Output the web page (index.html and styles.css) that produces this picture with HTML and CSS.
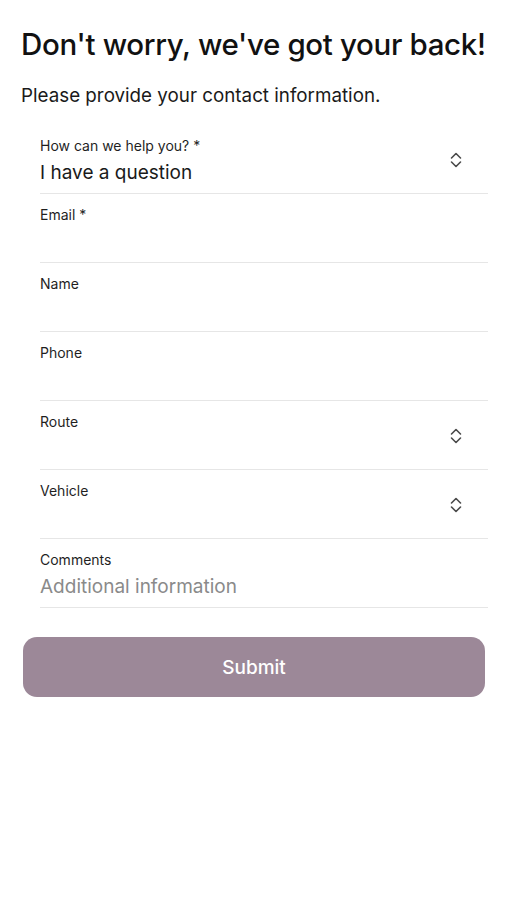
FILE: index.html
```html
<!DOCTYPE html>
<html lang="en">
<head>
<meta charset="utf-8">
<title>Contact</title>
<link rel="stylesheet" href="styles.css">
</head>
<body>
<main class="page">
  <h1 class="title">Don't worry, we've got your back!</h1>
  <p class="subtitle">Please provide your contact information.</p>
  <form class="form">
    <div class="row has-select">
      <div class="field">
        <span class="label">How can we help you? *</span>
        <span class="value">I have a question</span>
      </div>
      <svg class="chev" width="14" height="18" viewBox="0 0 14 18"><path d="M2.5 7 L7 2.5 L11.5 7 M2.5 11 L7 15.5 L11.5 11" fill="none" stroke="#4a4a4a" stroke-width="1.6" stroke-linecap="round" stroke-linejoin="round"/></svg>
    </div>
    <div class="row">
      <div class="field">
        <span class="label">Email *</span>
        <span class="value"></span>
      </div>
    </div>
    <div class="row">
      <div class="field">
        <span class="label">Name</span>
        <span class="value"></span>
      </div>
    </div>
    <div class="row">
      <div class="field">
        <span class="label">Phone</span>
        <span class="value"></span>
      </div>
    </div>
    <div class="row has-select">
      <div class="field">
        <span class="label">Route</span>
        <span class="value"></span>
      </div>
      <svg class="chev" width="14" height="18" viewBox="0 0 14 18"><path d="M2.5 7 L7 2.5 L11.5 7 M2.5 11 L7 15.5 L11.5 11" fill="none" stroke="#4a4a4a" stroke-width="1.6" stroke-linecap="round" stroke-linejoin="round"/></svg>
    </div>
    <div class="row has-select">
      <div class="field">
        <span class="label">Vehicle</span>
        <span class="value"></span>
      </div>
      <svg class="chev" width="14" height="18" viewBox="0 0 14 18"><path d="M2.5 7 L7 2.5 L11.5 7 M2.5 11 L7 15.5 L11.5 11" fill="none" stroke="#4a4a4a" stroke-width="1.6" stroke-linecap="round" stroke-linejoin="round"/></svg>
    </div>
    <div class="row">
      <div class="field">
        <span class="label">Comments</span>
        <span class="value placeholder">Additional information</span>
      </div>
    </div>
  </form>
  <button class="submit" type="button">Submit</button>
</main>
</body>
</html>
```
FILE: styles.css
```css
* { box-sizing: border-box; }
html, body { margin: 0; padding: 0; background: #fff; }
body {
  font-family: Inter, "Noto Sans", "Liberation Sans", sans-serif;
  color: #111;
}
.page {
  padding: 24px 19px 0 21px;
  display: flex;
  flex-direction: column;
}
.title {
  margin: 0;
  font-size: 29.5px;
  line-height: 40px;
  font-weight: 500;
  letter-spacing: -0.35px;
  white-space: nowrap;
  color: #111;
}
.subtitle {
  margin: 19px 0 0;
  font-size: 18.8px;
  line-height: 26px;
  color: #1a1a1a;
}
.form {
  margin: 16px 0 0 19px;
  display: flex;
  flex-direction: column;
}
.row {
  display: flex;
  align-items: center;
  justify-content: space-between;
  padding: 12px 0 7px;
  border-bottom: 1px solid #e6e6e6;
}
.field {
  display: flex;
  flex-direction: column;
}
.label {
  font-size: 14px;
  line-height: 18px;
  color: #1f1f1f;
}
.value {
  margin-top: 5px;
  font-size: 19px;
  line-height: 26px;
  height: 26px;
  color: #1a1a1a;
}
.placeholder { color: #8a8a8a; }
.chev { margin-right: 25px; margin-top: -3px; }
.submit {
  margin: 29px 3px 0 2px;
  height: 60px;
  border: none;
  border-radius: 14px;
  background: #9c8898;
  color: #fff;
  font-family: Inter, "Noto Sans", "Liberation Sans", sans-serif;
  font-size: 19px;
  font-weight: 500;
}
```
